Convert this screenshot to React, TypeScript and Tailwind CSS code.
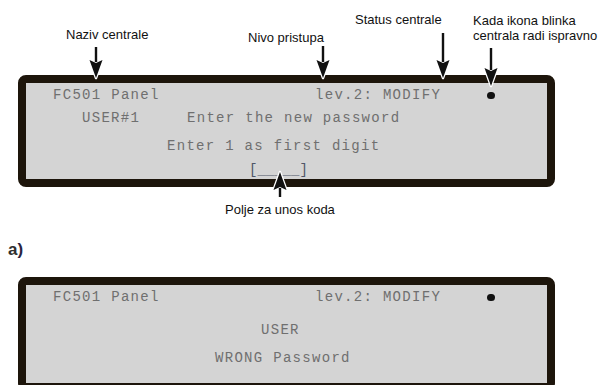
import React from "react";

const lcd = "font-['Liberation_Mono',monospace] text-[14px] tracking-[1.3px] text-[#6f6f6f] leading-none whitespace-pre";

function Dot() {
  return <span className="ml-[1px] inline-block w-[8px] h-[7px] rounded-full bg-[#111]" />;
}

function Arrow({ x, top, tip, up }: { x: number; top: number; tip: number; up?: boolean }) {
  // arrow drawn in page coordinates, head at tip
  const headLen = 18;
  const hw = 6.5;
  const shaft = up
    ? `M${x} ${tip + headLen - 2} L${x} ${top}`
    : `M${x} ${top} L${x} ${tip - headLen + 2}`;
  const head = up
    ? `M${x} ${tip} L${x - hw} ${tip + headLen} L${x} ${tip + headLen - 3} L${x + hw} ${tip + headLen} Z`
    : `M${x} ${tip} L${x - hw} ${tip - headLen} L${x} ${tip - headLen + 3} L${x + hw} ${tip - headLen} Z`;
  return (
    <g>
      <path d={shaft} stroke="#fff" strokeWidth="5" />
      <path d={head} fill="#fff" stroke="#fff" strokeWidth="2.5" strokeLinejoin="round" />
      <path d={shaft} stroke="#111" strokeWidth="2.4" />
      <path d={head} fill="#111" />
    </g>
  );
}

function Panel({ children, className }: { children: React.ReactNode; className?: string }) {
  return (
    <div
      className={
        "ml-[18px] w-[537px] shrink-0 border-[8px] border-[#1d150b] rounded-[8px] bg-[#d4d4d4] flex flex-col " +
        (className ?? "")
      }
    >
      {children}
    </div>
  );
}

export default function App() {
  const label = "absolute font-['Liberation_Sans',Arial,sans-serif] text-[13px] leading-[15px] text-[#111] whitespace-nowrap";
  return (
    <div className="relative w-[601px] h-[385px] overflow-hidden bg-white flex flex-col">
      <div className="relative h-[75px] shrink-0">
        <span className={label + " left-[66px] top-[27px]"}>Naziv centrale</span>
        <span className={label + " left-[248px] top-[30px]"}>Nivo pristupa</span>
        <span className={label + " left-[355px] top-[12px]"}>Status centrale</span>
        <span className={label + " left-[473px] top-[13px]"}>
          Kada ikona blinka
          <br />
          centrala radi ispravno
        </span>
      </div>

      <Panel className="h-[112px]">
        <div className={"flex items-center h-[24px] " + lcd}>
          <span className="ml-[27px] w-[262px]">FC501 Panel</span>
          <span className="w-[171px]">lev.2: MODIFY</span>
          <Dot />
        </div>
        <div className={"flex items-center h-[22px] " + lcd}>
          <span className="ml-[56px] w-[105px]">USER#1</span>
          <span>Enter the new password</span>
        </div>
        <div className={"flex items-center h-[34px] " + lcd}>
          <span className="ml-[141px]">Enter 1 as first digit</span>
        </div>
        <div className={"flex items-center h-[14px] " + lcd}>
          <span className="ml-[223px] tracking-[0px] text-[#4f5668]">[_____]</span>
        </div>
      </Panel>

      <div className="h-[90px] shrink-0 flex flex-col">
        <span className="mt-[16px] ml-[225px] font-['Liberation_Sans',Arial,sans-serif] text-[13px] leading-[14px] text-[#111]">
          Polje za unos koda
        </span>
        <span className="mt-[23px] ml-[8px] font-['Liberation_Sans',Arial,sans-serif] font-bold text-[17px] leading-[20px] text-[#2e2e2e]">
          a<span className="text-[#2a2440]">)</span>
        </span>
      </div>

      <Panel className="h-[114px]">
        <div className={"flex items-center h-[24px] " + lcd}>
          <span className="ml-[27px] w-[262px]">FC501 Panel</span>
          <span className="w-[171px]">lev.2: MODIFY</span>
          <Dot />
        </div>
        <div className={"flex items-center h-[42px] " + lcd}>
          <span className="ml-[235px]">USER</span>
        </div>
        <div className={"flex items-center h-[14px] " + lcd}>
          <span className="ml-[189px]">WRONG Password</span>
        </div>
      </Panel>

      <svg className="absolute left-0 top-0 pointer-events-none" width="601" height="385">
        <Arrow x={96} top={47} tip={78} />
        <Arrow x={323} top={46} tip={78} />
        <Arrow x={443} top={33} tip={78} />
        <Arrow x={491} top={48} tip={86} />
        <Arrow x={280} top={197} tip={172} up />
      </svg>
    </div>
  );
}
